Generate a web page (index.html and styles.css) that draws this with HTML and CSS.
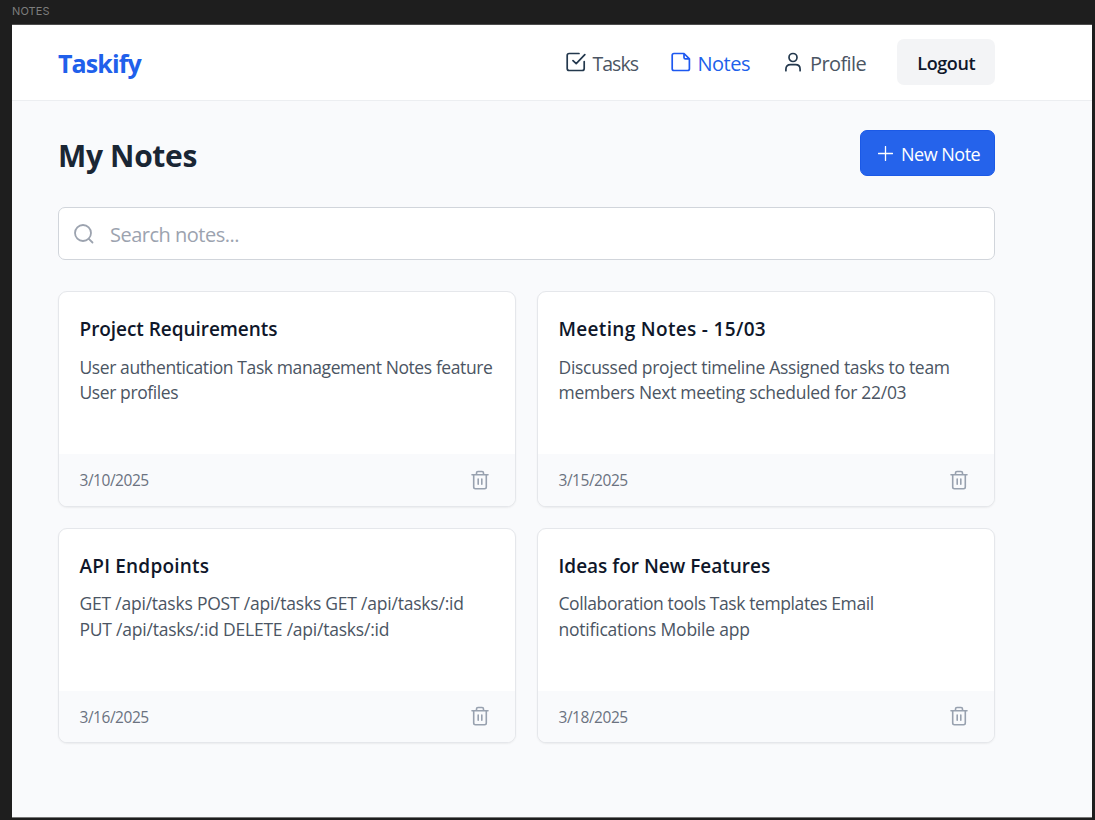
FILE: index.html
```html
<!DOCTYPE html>
<html lang="en">
<head>
<meta charset="utf-8">
<title>Taskify</title>
<link rel="stylesheet" href="styles.css">
</head>
<body>
<svg class="defs" width="0" height="0">
  <symbol id="trash" viewBox="0 0 18 20">
    <path d="M1 4.700H17M5.500 4.400V3Q5.500 1.500 7 1.500H11Q12.500 1.500 12.500 3V4.400M2.700 4.700V17Q2.700 18.700 4.500 18.700H13.500Q15.300 18.700 15.300 17V4.700M7.200 9V14.200M10.800 9V14.200"/>
  </symbol>
</svg>
<div class="label">NOTES</div>
<div class="frame">
  <header class="header">
    <div class="logo">Taskify</div>
    <nav class="nav">
      <a class="link tasks"><svg class="icon" viewBox="0 0 20 20"><path d="M13 1.500H3.200Q1.200 1.500 1.200 3.500V16.500Q1.200 18.500 3.200 18.500H16.200Q18.200 18.500 18.200 16.500V9.500M7 8.700L10.200 11.700L18.800 2.700"/></svg><span>Tasks</span></a>
      <a class="link notes"><svg class="icon" viewBox="0 0 20 20"><path d="M13 1.500H3Q1.200 1.500 1.200 3.300V16.700Q1.200 18.500 3 18.500H16.600Q18.400 18.500 18.400 16.700V6.900ZM13 1.500V5.400Q13 6.900 14.500 6.900H18.400"/></svg><span>Notes</span></a>
      <a class="link profile"><svg class="icon" viewBox="0 0 20 20"><circle cx="10" cy="5.500" r="4"/><path d="M2.900 18.700V17.300Q2.900 12.700 7.500 12.700H12.500Q17.100 12.700 17.100 17.300V18.700"/></svg><span>Profile</span></a>
      <button class="logout">Logout</button>
    </nav>
  </header>
  <main class="main">
    <div class="top">
      <h1 class="title">My Notes</h1>
      <button class="new"><svg class="plus" viewBox="0 0 15 15"><path d="M7.500 0.500V14.500M0.500 7.500H14.500"/></svg><span>New Note</span></button>
    </div>
    <div class="search">
      <svg class="lens" viewBox="0 0 20 20"><circle cx="9" cy="9" r="8"/><path d="M14.800 14.800L18.500 18.500"/></svg>
      <span>Search notes...</span>
    </div>
    <div class="grid">
      <article class="card">
        <div class="body"><h2 class="name snug">Project Requirements</h2><p class="text tight">User authentication Task management Notes feature<br>User profiles</p></div>
        <div class="foot"><span>3/10/2025</span><svg class="trash"><use href="#trash"/></svg></div>
      </article>
      <article class="card">
        <div class="body"><h2 class="name wide">Meeting Notes - 15/03</h2><p class="text">Discussed project timeline Assigned tasks to team<br>members Next meeting scheduled for 22/03</p></div>
        <div class="foot"><span>3/15/2025</span><svg class="trash"><use href="#trash"/></svg></div>
      </article>
      <article class="card">
        <div class="body"><h2 class="name roomy">API Endpoints</h2><p class="text loose">GET /api/tasks POST /api/tasks GET /api/tasks/:id<br>PUT /api/tasks/:id DELETE /api/tasks/:id</p></div>
        <div class="foot"><span>3/16/2025</span><svg class="trash"><use href="#trash"/></svg></div>
      </article>
      <article class="card">
        <div class="body"><h2 class="name">Ideas for New Features</h2><p class="text tight">Collaboration tools Task templates Email<br><span class="loose">notifications Mobile app</span></p></div>
        <div class="foot"><span>3/18/2025</span><svg class="trash"><use href="#trash"/></svg></div>
      </article>
    </div>
  </main>
</div>
</body>
</html>
```
FILE: styles.css
```css
* { box-sizing: border-box; }
body {
  margin: 0;
  height: 820px;
  overflow: hidden;
  background: #1e1e1e;
  font-family: "Open Sans", "Noto Sans", sans-serif;
  color: #0f172a;
}
h1, h2, p { margin: 0; }
span, h1, h2, p, .logo { white-space: nowrap; }
button { border: 0; font-family: inherit; padding: 0; }
svg { fill: none; stroke: currentColor; stroke-linecap: round; stroke-linejoin: round; flex: none; }
.defs { position: absolute; }
.label {
  height: 24px;
  padding-left: 12px;
  font: 11px/23px Inter, sans-serif;
  letter-spacing: 0.1px;
  color: #7d7d7d;
}
.frame {
  width: 1080px;
  height: 794px;
  margin-left: 12px;
  background: #f9fafc;
  border-top: 1px solid #4c4c4c;
  border-bottom: 1px solid #777;
}
.header {
  height: 76px;
  padding: 0 96.600px 0 46px;
  display: flex;
  justify-content: space-between;
  align-items: center;
  background: #fff;
  border-bottom: 1px solid #eceef1;
}
.logo { font-size: 25px; font-weight: 700; letter-spacing: -0.900px; color: #2060eb; }
.nav { display: flex; align-items: center; }
.link { display: flex; align-items: center; font-size: 20px; letter-spacing: -0.500px; color: #4b5563; }
.link span { padding-top: 1px; }
.icon { width: 20px; height: 20px; margin-right: 7px; margin-bottom: 2px; stroke-width: 1.700; color: #23384d; }
.tasks { width: 105px; font-size: 19.500px; letter-spacing: -1px; }
.notes { width: 112.500px; color: #2060eb; }
.notes .icon { color: #1d58f0; }
.profile { width: 114px; letter-spacing: -0.600px; }
.logout {
  width: 98.400px;
  height: 46px;
  padding-top: 2px;
  margin-bottom: 1px;
  border-radius: 7px;
  background: #f3f4f6;
  color: #0f172a;
  font-size: 18px;
  font-weight: 600;
  letter-spacing: -0.400px;
}
.main { padding: 29px 97px 0 46px; }
.top { display: flex; justify-content: space-between; height: 46px; align-items: center; }
.title { padding-top: 4px; font-size: 30px; font-weight: 700; letter-spacing: -0.350px; color: #1a2634; }
.new {
  width: 135px;
  height: 46px;
  padding-left: 17px;
  display: flex;
  align-items: center;
  gap: 8px;
  border: 1px solid #1b59e6;
  border-radius: 7px;
  background: #2563eb;
  color: #fff;
  font-size: 18px;
  letter-spacing: -0.500px;
}
.new span { padding-top: 2px; }
.plus { width: 15px; height: 15px; margin-top: 1px; stroke-width: 1.300; }
.search {
  height: 53px;
  margin: 31px 0 31px;
  padding-left: 15px;
  display: flex;
  align-items: center;
  gap: 16px;
  border: 1px solid #d1d5db;
  border-radius: 7px;
  background: #fff;
  color: #9ca3af;
  font-size: 20px;
  letter-spacing: -0.500px;
}
.search span { padding-top: 2px; }
.lens { width: 20px; height: 20px; stroke-width: 1.800; }
.grid { display: grid; grid-template-columns: 1fr 1fr; gap: 21px; }
.card {
  height: 215.500px;
  display: flex;
  flex-direction: column;
  overflow: hidden;
  border: 1px solid #e5e7eb;
  border-radius: 9px;
  background: #fff;
  box-shadow: 0 1px 2px rgba(0, 0, 0, 0.060);
}
.body { flex: 1; padding: 22px 20.500px 0; }
.name { font-size: 19px; line-height: 30px; font-weight: 600; letter-spacing: 0; }
.snug { letter-spacing: -0.050px; }
.roomy { letter-spacing: 0.200px; }
.wide { letter-spacing: 0.320px; }
.text { margin-top: 10.500px; font-size: 17.500px; line-height: 25.500px; letter-spacing: -0.300px; color: #4b5563; }
.tight { letter-spacing: -0.400px; }
.loose { letter-spacing: -0.220px; }
.foot {
  height: 51.500px;
  padding: 0 26px 0 20.500px;
  display: flex;
  align-items: center;
  justify-content: space-between;
  background: #f9fafc;
  color: #6b7280;
  font-size: 15.500px;
  letter-spacing: -0.470px;
}
.foot span { padding-top: 1px; }
.trash { width: 18px; height: 20px; stroke-width: 1.600; color: #98a1af; }
```
